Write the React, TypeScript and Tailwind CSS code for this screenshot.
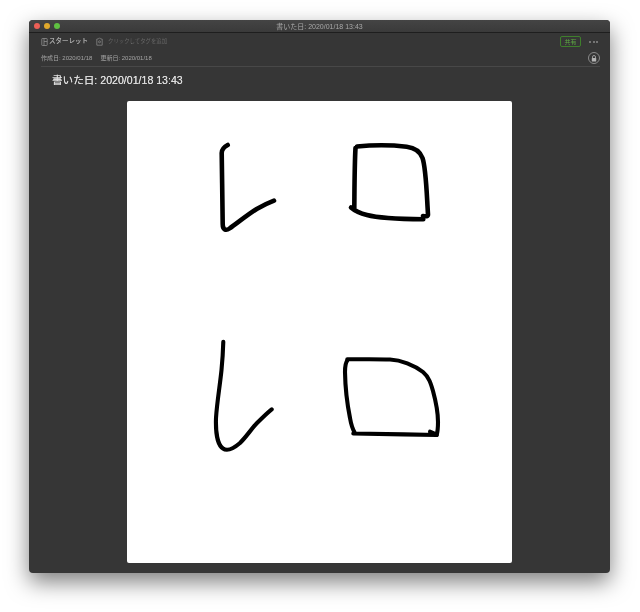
export default function App() {
  const font = { fontFamily: '"Liberation Sans", "Noto Sans CJK JP", sans-serif' };
  return (
    <div className="h-[612px] w-[640px] overflow-hidden bg-white pt-[20px] pl-[29px]" style={font}>
      <div className="flex h-[553px] w-[581px] flex-col overflow-hidden rounded-[4px] bg-[#363636] shadow-[0_9px_22px_rgba(0,0,0,0.5)]">
        <div className="relative flex h-[13px] shrink-0 items-center justify-center border-b border-[#1e1e1e] bg-gradient-to-b from-[#444444] to-[#3a3a3a]">
          <div className="absolute left-[5px] top-[3px] flex gap-[4px]">
            <span className="h-[6px] w-[6px] rounded-full bg-[#ec5f56]" />
            <span className="h-[6px] w-[6px] rounded-full bg-[#e0a92c]" />
            <span className="h-[6px] w-[6px] rounded-full bg-[#5fc041]" />
          </div>
          <span className="text-[7px] leading-none text-[#a8a8a8] blur-[0.2px]">書いた日: 2020/01/18 13:43</span>
        </div>
        <div className="flex h-[17px] shrink-0 items-center pl-[12px] pr-[12px] blur-[0.2px]">
          <svg width="7" height="8" viewBox="0 0 7 8" fill="none" stroke="#8f8f8f" strokeWidth="0.8">
            <rect x="0.8" y="0.5" width="5.4" height="7" rx="0.6" />
            <path d="M3 0.5V7.5M3 3.5H6.2" />
          </svg>
          <span className="ml-[1px] text-[6.5px] leading-none text-[#a8a8a8] [text-shadow:0_0_0.3px_#a8a8a8]">スターレット</span>
          <svg width="7" height="9" viewBox="0 0 7 9" fill="none" stroke="#858585" strokeWidth="0.8" className="ml-[8px]">
            <path d="M2.3 2L3.5 0.8L4.7 2H6.2V8.2H0.8V2Z" />
            <circle cx="3.5" cy="4.8" r="1" />
          </svg>
          <span className="ml-[5px] text-[5.4px] leading-none text-[#666666]">クリックしてタグを追加</span>
          <div className="ml-auto flex h-[11px] w-[21px] items-center justify-center rounded-[2px] border border-[#3f7f2c] text-[6px] leading-none text-[#5fa844]">共有</div>
          <div className="ml-[8px] flex gap-[1.5px]">
            <span className="h-[2px] w-[2px] rounded-full bg-[#8a8a8a]" />
            <span className="h-[2px] w-[2px] rounded-full bg-[#8a8a8a]" />
            <span className="h-[2px] w-[2px] rounded-full bg-[#8a8a8a]" />
          </div>
        </div>
        <div className="ml-[12px] mr-[10px] flex h-[17px] shrink-0 items-center border-b border-[#484848] text-[6px] leading-none text-[#a4a4a4]">
          <span className="blur-[0.2px]">作成日: 2020/01/18</span>
          <span className="ml-[8px] blur-[0.2px]">更新日: 2020/01/18</span>
          <div className="ml-auto flex h-[12px] w-[12px] items-center justify-center rounded-full border border-[#8a8a8a]">
            <svg width="6" height="7" viewBox="0 0 6 7">
              <path d="M1.5 3V2a1.5 1.5 0 0 1 3 0v1" fill="none" stroke="#b5b5b5" strokeWidth="0.8" />
              <rect x="0.8" y="3" width="4.4" height="3.5" rx="0.5" fill="#b5b5b5" />
            </svg>
          </div>
        </div>
        <div className="flex h-[34px] shrink-0 items-center pl-[23px] pb-[7px] text-[10.6px] leading-none text-[#dedede] blur-[0.2px] [text-shadow:0_0_0.4px_#dedede]">
          書いた日: 2020/01/18 13:43
        </div>
        <div className="ml-[98px] h-[462px] w-[385px] shrink-0 overflow-hidden rounded-[2px] bg-white">
          <svg className="blur-[0.3px]" width="385" height="462" viewBox="127 101 385 462" fill="none" stroke="#000" strokeWidth="4.6" strokeLinecap="round" strokeLinejoin="round">
            <path d="M227.7 145C224 147 221.7 149 221.7 153C222 175 222.5 205 222.7 224C222.7 230 226 231 229.5 228.5C238 222.5 247 215 256.7 209C262 206 268 203 274 200.7" />
            <path d="M357 146.5C372 145 392 145 406.7 146.7C415 147.8 420 151 422.5 158C426 168 426.5 190 428 214.5C428 216.5 426 216.5 423 216" />
            <path d="M355.5 148C354.5 165 354.5 190 354.3 208M351 207.5C355 211 361 213.5 367 215C380 218.5 400 219 423.3 219.3" />
            <path d="M223.3 341.7C223 352 222.5 360 221.5 370C220 385 217 402 216 418C215.5 432 217.5 445 223 448.5C227 451.5 233 449 240 443C247 436 252 428 257 423C262 418 267 413 271.7 409.3" strokeWidth="4.1" />
            <path d="M347.3 359.3C362 359.3 377 359 390 359.5C401 360 414 365 423 372C429 377 431 384 433 391C436 402 438 412 438 422C438 428 437.5 432 436.7 435C434 433 432 432.5 430 431.7" strokeWidth="4.1" />
            <path d="M347.3 360.5C345.3 363 345 366 345 372C345.2 385 347 403 350 418C351 424 352.5 429 355 433.3M353.3 433.5C375 434 410 434.5 436.7 435" strokeWidth="4.1" />
          </svg>
        </div>
      </div>
    </div>
  );
}
